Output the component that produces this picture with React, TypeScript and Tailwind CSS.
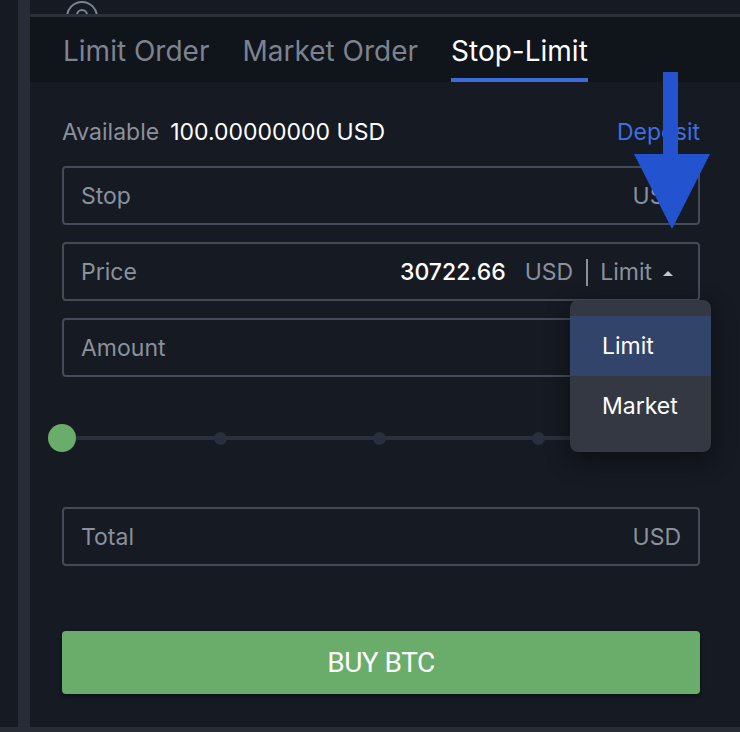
import React from "react";

const font = { fontFamily: "Inter, 'Noto Sans', sans-serif" };

function Field({
  label,
  children,
}: {
  label: string;
  children?: React.ReactNode;
}) {
  return (
    <div className="flex h-[59px] items-center justify-between rounded-[4px] border-2 border-[#444b58] pl-[17px] pr-[17px] pt-[2px]">
      <span className="text-[23px] text-[#8a919d]">{label}</span>
      {children}
    </div>
  );
}

export default function App() {
  return (
    <div
      className="flex h-[732px] w-[740px] flex-col overflow-hidden bg-[#151a23]"
      style={font}
    >
      <div className="relative flex h-[727px]">
        {/* left edge of the neighbouring panel */}
        <div className="w-[18px] bg-[#151a23]" />
        <div className="w-[12px] bg-[#272c37]" />

        <main className="flex flex-1 flex-col">
          <div className="relative h-[14px] overflow-hidden">
            <svg
              className="absolute left-[35px] top-[1px]"
              width="34"
              height="34"
              viewBox="0 0 34 34"
              fill="none"
              stroke="#7c8491"
              strokeWidth="2"
            >
              <circle cx="17" cy="16" r="15" />
              <circle cx="17" cy="14" r="5" />
            </svg>
          </div>
          <div className="h-[3px] bg-[#2b303b]" />

          {/* tabs */}
          <nav className="flex h-[65px] items-stretch gap-[33px] bg-[#10141b] pl-[33px] text-[28px] leading-[34px]">
            <div className="pt-[17px] text-[#7c838f]">Limit Order</div>
            <div className="pt-[17px] text-[#7c838f]">Market Order</div>
            <div className="border-b-4 border-[#3a6ddb] pt-[17px] text-white">
              Stop-Limit
            </div>
          </nav>

          <section className="flex flex-col pl-[32px] pr-[40px]">
            <div className="mt-[35px] flex h-[30px] items-center justify-between text-[23px]">
              <div>
                <span className="text-[#8a919d]">Available</span>
                <span className="ml-[11px] text-white">100.00000000 USD</span>
              </div>
              <span className="text-[#3d6fe0]">Deposit</span>
            </div>

            <div className="mt-[19px]">
              <Field label="Stop">
                <span className="text-[23px] text-[#8a919d]">USD</span>
              </Field>
            </div>

            <div className="relative mt-[17px]">
              <Field label="Price">
                <div className="flex items-center">
                  <span className="text-[23px] font-medium text-white">30722.66</span>
                  <span className="ml-[19px] text-[23px] text-[#8a919d]">USD</span>
                  <span className="ml-[13px] h-[27px] w-[2px] bg-[#8a919d]" />
                  <span className="ml-[12px] text-[23px] text-[#8a919d]">Limit</span>
                  <svg className="ml-[10px] mr-[7px]" width="12" height="8" viewBox="0 0 12 8">
                    <path d="M1 7 L6 2 L11 7 Z" fill="#c3c8d0" />
                  </svg>
                </div>
              </Field>

              {/* order type menu */}
              <div className="absolute right-[-11px] top-[58px] z-10 w-[141px] rounded-[8px] bg-[#343843] py-[16px] text-[23px] text-white shadow-[0_8px_24px_rgba(0,0,0,0.45)]">
                <div className="flex h-[60px] items-center bg-[#33446a] pl-[32px]">Limit</div>
                <div className="flex h-[60px] items-center pl-[32px]">Market</div>
              </div>
            </div>

            <div className="mt-[17px]">
              <Field label="Amount" />
            </div>

            {/* percentage slider */}
            <div className="relative -ml-[14px] -mr-[11px] mt-[47px] flex h-[28px] items-center">
              <div className="absolute left-[14px] right-[14px] h-[4px] bg-[#2a303b]" />
              <div className="relative flex w-full items-center justify-between">
                <span className="flex h-[28px] w-[28px] items-center justify-center">
                  <span className="h-[28px] w-[28px] rounded-full bg-[#6aad6a]" />
                </span>
                <span className="flex h-[28px] w-[28px] items-center justify-center">
                  <span className="h-[13px] w-[13px] rounded-full bg-[#2a303b]" />
                </span>
                <span className="flex h-[28px] w-[28px] items-center justify-center">
                  <span className="h-[13px] w-[13px] rounded-full bg-[#2a303b]" />
                </span>
                <span className="flex h-[28px] w-[28px] items-center justify-center">
                  <span className="h-[13px] w-[13px] rounded-full bg-[#2a303b]" />
                </span>
                <span className="flex h-[28px] w-[28px] items-center justify-center">
                  <span className="h-[13px] w-[13px] rounded-full bg-[#2a303b]" />
                </span>
              </div>
            </div>

            <div className="mt-[55px]">
              <Field label="Total">
                <span className="text-[23px] text-[#8a919d]">USD</span>
              </Field>
            </div>

            <button
              className="mt-[65px] h-[63px] rounded-[4px] bg-[#6aad6a] text-[28px] tracking-[-0.5px] text-white shadow-[0_2px_4px_rgba(0,0,0,0.4)]"
              style={{ fontFamily: "Roboto, sans-serif" }}
            >
              BUY BTC
            </button>
          </section>
        </main>

        {/* annotation arrow */}
        <svg
          className="absolute left-[634px] top-[72px] z-20"
          width="76"
          height="158"
          viewBox="0 0 76 158"
        >
          <rect x="29" y="0" width="15" height="84" fill="#2453cf" />
          <path d="M0 82 L76 82 L38 157 Z" fill="#2453cf" />
        </svg>
      </div>
      <div className="h-[5px] bg-[#272c37]" />
    </div>
  );
}
